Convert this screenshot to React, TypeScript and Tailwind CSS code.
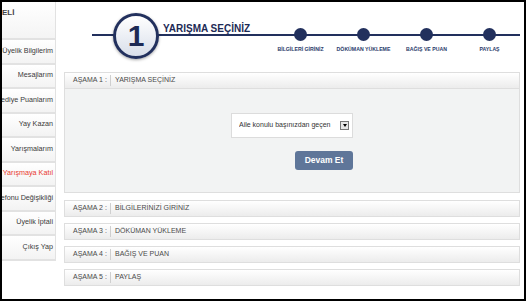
import React from 'react';

// sidebar is cut off on its left in the screenshot, labels kept as they show
const sidebarItems = [
  { label: 'Üyelik Bilgilerim' },
  { label: 'Mesajlarım' },
  { label: 'ediye Puanlarım' },
  { label: 'Yay Kazan' },
  { label: 'Yarışmalarım' },
  { label: 'Yarışmaya Katıl', active: true },
  { label: 'efonu Değişikliği' },
  { label: 'Üyelik İptali' },
  { label: 'Çıkış Yap' },
];

const steps = ['BİLGİLERİ GİRİNİZ', 'DÖKÜMAN YÜKLEME', 'BAĞIŞ VE PUAN', 'PAYLAŞ'];

const stages = [
  { no: 2, title: 'BİLGİLERİNİZİ GİRİNİZ' },
  { no: 3, title: 'DÖKÜMAN YÜKLEME' },
  { no: 4, title: 'BAĞIŞ VE PUAN' },
  { no: 5, title: 'PAYLAŞ' },
];

function StageHeader({ no, title }: { no: number; title: string }) {
  return (
    <div className="flex h-[17px] items-center border border-[#dedede] bg-gradient-to-b from-white to-[#ececec] pl-[8px] text-[7px] text-[#4a4a4a]">
      <span className="w-[37px] whitespace-nowrap">AŞAMA {no} :</span>
      <span className="mr-[4px] h-[11px] w-px bg-[#cfcfcf]" />
      <span className="whitespace-nowrap">{title}</span>
    </div>
  );
}

function Sidebar() {
  return (
    <div className="flex w-[54px] shrink-0 flex-col">
      <div className="h-[38px] border-b-2 border-r border-[#e2e2e2] bg-gradient-to-b from-white to-[#f4f4f4] pt-[5px]">
        <div className="whitespace-nowrap text-[8px] font-bold text-[#444]">ELİ</div>
      </div>
      {sidebarItems.map(item => (
        <div
          key={item.label}
          className={`flex h-[24.5px] items-center justify-end whitespace-nowrap border-b-2 border-r border-[#e2e2e2] bg-gradient-to-b from-white to-[#f3f3f3] pr-[2px] text-[7.2px] ${
            item.active ? 'text-[#e8392f]' : 'text-[#3a3a3a]'
          }`}
        >
          {item.label}
        </div>
      ))}
    </div>
  );
}

function StepHeader() {
  return (
    <div className="relative flex h-[70px] shrink-0">
      {/* navy progress line behind the circle and dots */}
      <div className="absolute left-[36px] right-[4px] top-[32px] h-[2px] bg-[#22305d]" />
      <div className="relative z-10 ml-[57px] mt-[11px] flex h-[46px] w-[46px] shrink-0 items-center justify-center rounded-full border-[3px] border-[#22305d] bg-gradient-to-b from-white to-[#d9dfea] shadow-[0_1px_3px_rgba(0,0,0,0.35)]">
        <span className="text-[30px] font-bold leading-none text-[#1d2a55]">1</span>
      </div>
      <div className="ml-[4px] mt-[19px] whitespace-nowrap text-[10px] font-bold text-[#1d2a55]">YARIŞMA SEÇİNİZ</div>
      <div className="ml-auto mr-[3px] grid w-[252px] grid-cols-4">
        {steps.map(s => (
          <div key={s} className="flex flex-col items-center pt-[26px]">
            <div className="relative z-10 h-[13px] w-[13px] rounded-full bg-[#22305d]" />
            <div className="mt-[5px] whitespace-nowrap text-[5.2px] font-bold text-[#2a3a6a]">{s}</div>
          </div>
        ))}
      </div>
    </div>
  );
}

export default function App() {
  return (
    <div className="flex h-[301px] w-[526px] overflow-hidden border-2 border-black bg-white font-['Liberation_Sans',Arial,sans-serif]">
      <Sidebar />
      <div className="flex flex-1 flex-col">
        <StepHeader />
        <div className="flex flex-col gap-[6px] pl-[8px] pr-[4px]">
          <div>
            <StageHeader no={1} title="YARIŞMA SEÇİNİZ" />
            <div className="flex h-[104px] flex-col items-center border border-t-0 border-[#dedede] bg-[#f2f3f3] pt-[24px]">
              <div className="flex h-[25px] w-[122px] items-center border border-[#dcdcdc] bg-white pl-[7px] pr-[3px]">
                <span className="flex-1 overflow-hidden whitespace-nowrap text-[7px] text-[#333]">Aile konulu başınızdan geçen</span>
                <span className="ml-px flex h-[9px] w-[9px] shrink-0 items-center justify-center border border-[#777] bg-[#e6e6e6]">
                  <span className="h-0 w-0 border-x-[2.5px] border-t-[3px] border-x-transparent border-t-black" />
                </span>
              </div>
              <div className="mt-[13px] flex w-[122px] justify-end">
                <button className="h-[19px] w-[58px] rounded-[3px] bg-[#5f7699] text-[8.5px] font-bold text-white">Devam Et</button>
              </div>
            </div>
          </div>
          <div className="flex flex-col gap-[6px] pt-[1px]">
            {stages.map(st => (
              <StageHeader key={st.no} no={st.no} title={st.title} />
            ))}
          </div>
        </div>
      </div>
    </div>
  );
}
